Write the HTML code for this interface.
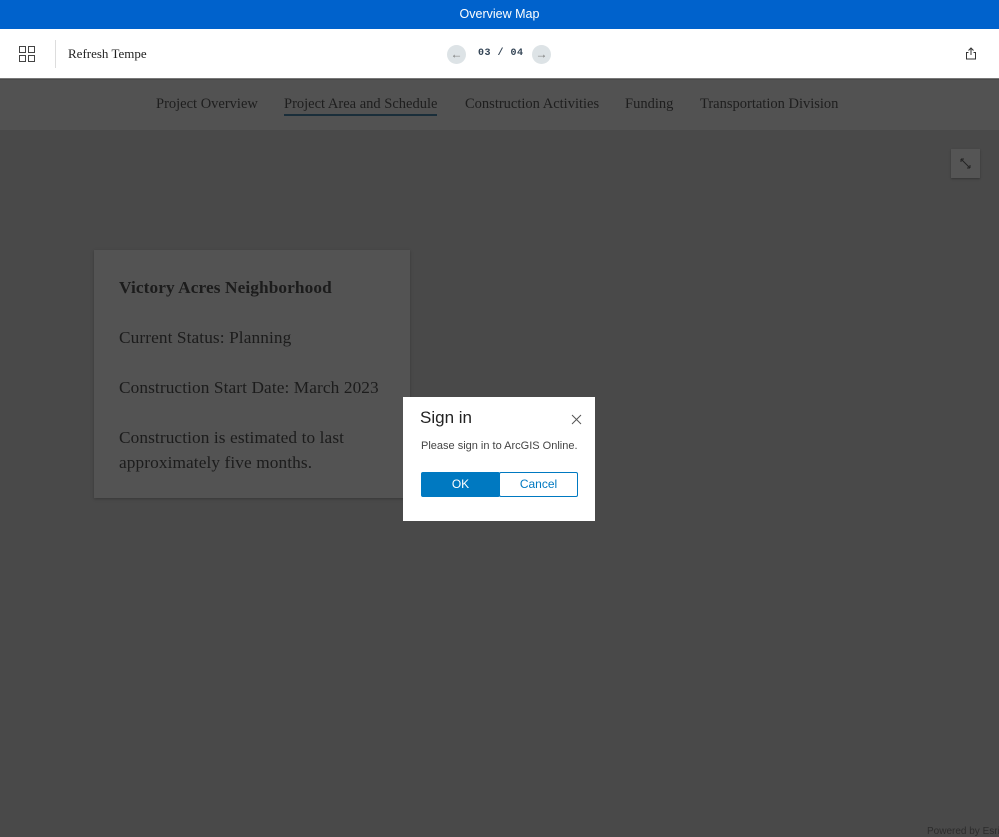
<!DOCTYPE html>
<html><head><meta charset="utf-8"><style>
*{margin:0;padding:0;box-sizing:border-box}
body{width:999px;height:836px;overflow:hidden;background:#494949;font-family:"Liberation Sans",sans-serif;position:relative;white-space:nowrap}
.top{position:absolute;left:0;top:0;width:999px;height:29px;background:#0062cc;color:#fff;font-size:12.5px;text-align:center;line-height:29px}
.hdr{position:absolute;left:0;top:29px;width:999px;height:50px;background:#fff;border-bottom:1px solid #777}
.serif{font-family:"Liberation Serif",serif}
.title{position:absolute;left:68px;top:17px;font-size:13px;color:#222}
.div{position:absolute;left:55px;top:11px;width:1px;height:28px;background:#ddd}
.circ{position:absolute;top:16px;width:19px;height:19px;border-radius:50%;background:#dde3e6;color:#777;font-size:12px;text-align:center;line-height:18px}
.pg{position:absolute;left:478px;top:19px;font-family:"Liberation Mono",monospace;font-size:10px;font-weight:bold;color:#345;letter-spacing:0.5px}
.nav{position:absolute;left:0;top:80px;width:999px;height:50px;background:#525252}
.nav span{position:absolute;top:16px;font-size:14.5px;color:#1e1e1e}
.card{position:absolute;left:94px;top:250px;width:316px;height:248px;background:#535353;box-shadow:0 1px 3px rgba(0,0,0,.25)}
.card p{position:absolute;left:25px;font-size:17.3px;color:#1c1c1c;line-height:25px;letter-spacing:0.1px}
.dlg{position:absolute;left:403px;top:397px;width:192px;height:124px;background:#fff}
.btn{position:absolute;top:75px;width:79px;height:25px;font-size:12px;text-align:center;line-height:23px;border:1px solid #0079c1;border-radius:2px}
</style></head><body>
<div class="top">Overview Map</div>
<div class="hdr">
<svg style="position:absolute;left:19px;top:17px" width="16" height="16" viewBox="0 0 16 16" fill="none" stroke="#444" stroke-width="1"><rect x=".5" y=".5" width="6" height="6"/><rect x="9.5" y=".5" width="6" height="6"/><rect x=".5" y="9.5" width="6" height="6"/><rect x="9.5" y="9.5" width="6" height="6"/></svg>
<div class="div"></div>
<div class="title serif">Refresh Tempe</div>
<div class="circ" style="left:447px">←</div>
<div class="pg">03 / 04</div>
<div class="circ" style="left:532px">→</div>
<svg style="position:absolute;left:965px;top:18px" width="12" height="13" viewBox="0 0 12 13" fill="none" stroke="#333" stroke-width="1"><path d="M6 1v7M3.5 3.5L6 1l2.5 2.5M3.5 5.5H1.5v6.5h9V5.5h-2"/></svg>
</div>
<div class="nav serif">
<span style="left:156px">Project Overview</span>
<span style="left:284px;border-bottom:2px solid #1a2e3a;padding-bottom:1px">Project Area and Schedule</span>
<span style="left:465px">Construction Activities</span>
<span style="left:625px">Funding</span>
<span style="left:700px">Transportation Division</span>
</div>
<div style="position:absolute;left:951px;top:149px;width:29px;height:29px;background:#555;box-shadow:0 1px 2px rgba(0,0,0,.3)">
<svg width="29" height="29" viewBox="0 0 29 29" fill="none" stroke="#222" stroke-width="1"><path d="M10 10l9 9M10 10h3M10 10v3M19 19h-3M19 19v-3"/></svg></div>
<div class="card serif">
<p style="top:25px;font-weight:bold">Victory Acres Neighborhood</p>
<p style="top:75px">Current Status: Planning</p>
<p style="top:125px">Construction Start Date: March 2023</p>
<p style="top:175px">Construction is estimated to last<br>approximately five months.</p>
</div>
<div class="dlg">
<div style="position:absolute;left:17px;top:11px;font-size:17px;color:#222">Sign in</div>
<svg style="position:absolute;left:168px;top:17px" width="11" height="11" viewBox="0 0 11 11" stroke="#555" stroke-width="1"><path d="M1 1l9 9M10 1l-9 9"/></svg>
<div style="position:absolute;left:18px;top:43px;font-size:11px;color:#444">Please sign in to ArcGIS Online.</div>
<div class="btn" style="left:18px;background:#0079c1;color:#fff">OK</div>
<div class="btn" style="left:96px;background:#fff;color:#0079c1">Cancel</div>
</div>
<div style="position:absolute;left:927px;top:826px;font-size:10px;color:#2c2c2c">Powered by Esri</div>
</body></html>
